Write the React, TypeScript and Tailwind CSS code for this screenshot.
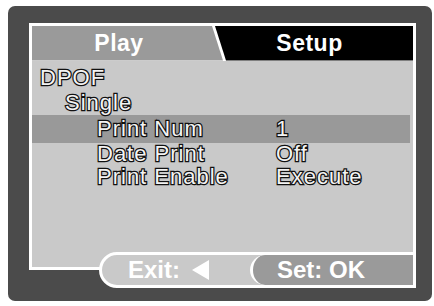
const outline =
  "text-[#f4f4f4] [-webkit-text-stroke:2.5px_#111] [paint-order:stroke_fill] tracking-[1px]";

const rows = [
  { label: "Print Num", value: "1", active: true },
  { label: "Date Print", value: "Off", active: false },
  { label: "Print Enable", value: "Execute", active: false },
];

export default function App() {
  return (
    <div className="w-[434px] h-[306px] bg-white pt-[6px] pl-[8px] font-['Liberation_Sans',Arial,sans-serif]">
      <div className="w-[424px] h-[295px] rounded-[7px] bg-[#4b4b4b] pt-[17px] pl-[21px]">
        <div className="w-[387px] flex flex-col">
          {/* tabs + list */}
          <div className="h-[229px] border-t-[3px] border-x-[3px] border-white flex flex-col">
            <div className="grid h-[32px] bg-white">
              <div className="col-start-1 row-start-1 bg-[#9a9a9a] [clip-path:polygon(0_0,180px_0,191px_100%,0_100%)]" />
              <div className="col-start-1 row-start-1 bg-black [clip-path:polygon(183px_0,100%_0,100%_100%,194px_100%)]" />
              <div className="relative col-start-1 row-start-1 flex items-center text-white font-bold text-[23px] tracking-[0.5px]">
                <span className="w-[174px] text-center">Play</span>
                <span className="flex-1 text-center">Setup</span>
              </div>
            </div>
            <div className="h-[3px] bg-white" />
            <div className="flex-1 bg-[#c9c9c9] pt-[4px] text-[22px]">
              <div className={`h-[25px] leading-[25px] pl-[8px] ${outline}`}>DPOF</div>
              <div className={`h-[25px] leading-[25px] pl-[33px] ${outline}`}>Single</div>
              {rows.map((r) => (
                <div
                  key={r.label}
                  className={`flex mr-[3px] ${r.active ? "h-[28px] leading-[27px] bg-[#999999]" : "h-[23px] leading-[21px]"}`}
                >
                  <span className={`w-[244px] pl-[65px] ${outline}`}>{r.label}</span>
                  <span className={outline}>{r.value}</span>
                </div>
              ))}
            </div>
          </div>
          {/* bottom buttons */}
          <div className="flex">
            <div className="w-[70px] h-[18px] border-l-[3px] border-b-[3px] border-white bg-[#c9c9c9]" />
            <div className="flex-1 bg-[linear-gradient(#c9c9c9_0_15px,#fff_15px_18px,transparent_18px)]">
              <div className="h-[36px] flex rounded-l-[18px] border-[3px] border-white bg-[#c9c9c9] text-white font-bold text-[24px]">
                <div className="w-[148px] flex items-center pl-[26px] gap-[12px]">
                  <span>Exit:</span>
                  <svg width="17" height="20" viewBox="0 0 17 20">
                    <polygon points="17,0 17,20 0,10" fill="white" />
                  </svg>
                </div>
                <div className="flex-1 flex items-center pl-[24px] rounded-l-[16px] border-l-[3px] border-white bg-[#9a9a9a]">
                  Set: OK
                </div>
              </div>
            </div>
          </div>
        </div>
      </div>
    </div>
  );
}
